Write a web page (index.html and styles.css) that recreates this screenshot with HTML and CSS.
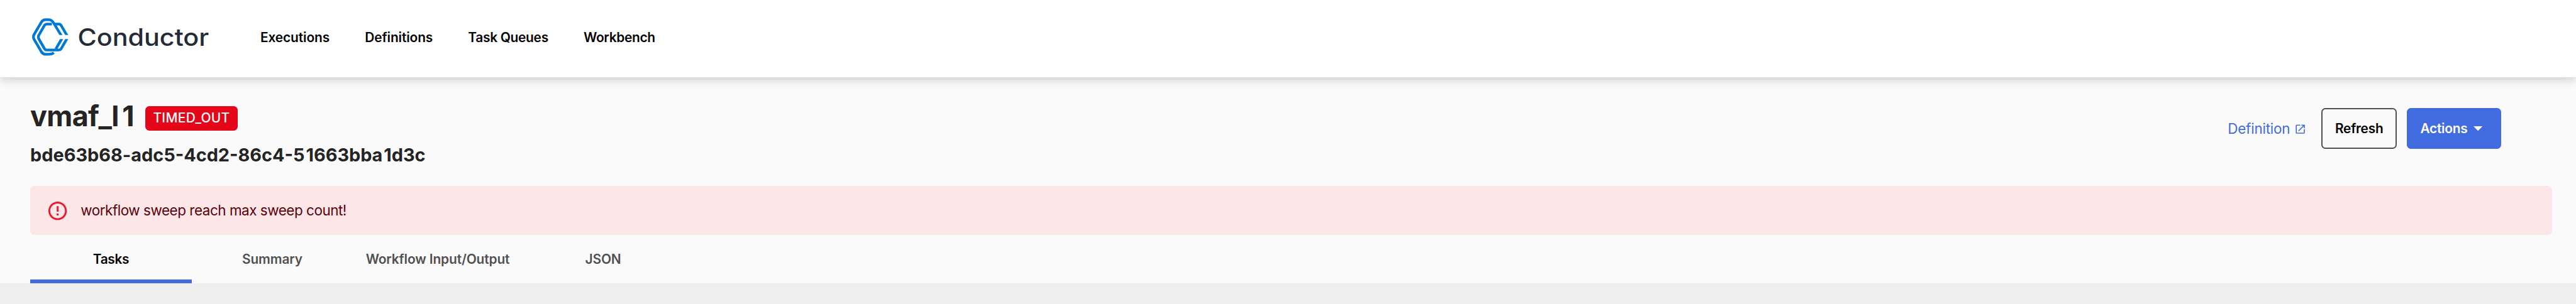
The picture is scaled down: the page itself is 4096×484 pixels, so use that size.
FILE: index.html
```
<!DOCTYPE html>
<html lang="en">
<head>
<meta charset="utf-8">
<title>Conductor</title>
<link rel="stylesheet" href="styles.css">
</head>
<body>
<header class="topbar">
  <a class="brand">
    <svg class="brand-mark" viewBox="72 80 216 224" fill="none" stroke="#0079d3" stroke-width="16">
      <defs>
        <clipPath id="ends"><path d="M60 70H300V180H200V204H300V310H60Z"/></clipPath>
      </defs>
      <g clip-path="url(#ends)">
        <path d="M251 192L200 108Q188 89 172 89H152Q136 89 127 104L84 177Q76 191 84 206L128 281Q137 295 154 295H172Q190 295 202 286"/>
        <path d="M190 115H160Q150 115 145 124L113 179Q106 191 112 203L146 262Q150 269 158 269H230Q240 269 245 262L285 192"/>
        <path d="M213 264L255 192"/>
        <path d="M206 115H232Q240 115 245 123L285 192"/>
      </g>
    </svg>
    <svg class="brand-name" viewBox="0 0 262 50"><text x="-2" y="43" textLength="260.500" lengthAdjust="spacingAndGlyphs">Conductor</text></svg>
  </a>
  <nav class="nav">
    <a>Executions</a><a>Definitions</a><a class="snug">Task Queues</a><a class="snug">Workbench</a>
  </nav>
</header>
<main class="page">
  <section class="heading">
    <div class="titles">
      <h1 class="name"><span>vmaf_<span class="pre-one">l</span>1</span><span class="badge">TIMED_OUT</span></h1>
      <h2 class="id">bde63b68-adc5-4cd2-86c4-<span class="pre-one">5</span>1663bb<span class="pre-one">a</span>1d3c</h2>
    </div>
    <div class="actions">
      <a class="link">Definition
        <svg class="link-icon" viewBox="0 0 24 24" fill="currentColor"><path d="M19 19H5V5h7V3H5a2 2 0 0 0-2 2v14a2 2 0 0 0 2 2h14c1.100 0 2-.9 2-2v-7h-2v7zM14 3v2h3.590l-9.830 9.830 1.410 1.410L19 6.410V10h2V3h-7z"/></svg>
      </a>
      <button class="btn btn-outline">Refresh</button>
      <button class="btn btn-solid">Actions
        <svg class="caret" viewBox="0 0 18 9" fill="currentColor"><path d="M0 0H18L9 9Z"/></svg>
      </button>
    </div>
  </section>
  <div class="alert">
    <svg class="alert-icon" viewBox="0 0 24 24" fill="currentColor"><path d="M11 15h2v2h-2zm0-8h2v6h-2zm.99-5C6.470 2 2 6.480 2 12s4.470 10 9.990 10C17.520 22 22 17.520 22 12S17.520 2 11.990 2zM12 20c-4.420 0-8-3.580-8-8s3.580-8 8-8 8 3.580 8 8-3.580 8-8 8z"/></svg>
    <span>workflow sweep reach max sweep count!</span>
  </div>
  <div class="tabs">
    <a class="tab tab-active">Tasks</a><a class="tab">Summary</a><a class="tab tab-wide">Workflow Input/Output</a><a class="tab">JSON</a>
  </div>
</main>
</body>
</html>
```
FILE: styles.css
```
* { box-sizing: border-box; }
html { font-size: 8.0188px; }
body {
  margin: 0;
  height: 100vh;
  overflow: hidden;
  background: #eee;
  font: 400 2.6rem/1.5 Inter, "Liberation Sans", sans-serif;
  color: #000;
}
.topbar {
  position: relative;
  display: flex;
  align-items: center;
  height: 15.4rem;
  padding: 0 6.4rem;
  background: #fff;
  box-shadow: 0 0.8rem 1.6rem rgba(0, 0, 0, 0.1), 0 0.2rem 2rem rgba(0, 0, 0, 0.1);
}
.brand { display: flex; align-items: center; height: 100%; margin-top: -0.6rem; }
.brand-mark { width: 7.2rem; height: 7.47rem; }
.brand-name { width: 26.2rem; height: 5rem; margin-left: 2rem; overflow: visible; fill: #242a36; }
.brand-name text { font: 500 48px Inter, sans-serif; }
.nav { display: flex; gap: 7rem; margin: -0.55rem 0 0 9.83rem; font-weight: 600; letter-spacing: -0.01rem; }
.snug { letter-spacing: -0.033rem; }
.page { height: 40.9rem; padding-top: 4.2rem; background: #fafafa; }
.heading {
  display: flex;
  justify-content: space-between;
  height: 17.3rem;
  padding: 0 14.8rem 0 6rem;
}
.name {
  display: flex;
  align-items: center;
  height: 7rem;
  margin: 0;
  font-size: 5.6rem;
  font-weight: 700;
  line-height: 1;
  letter-spacing: -0.085rem;
  color: #242424;
}
.pre-one { letter-spacing: 0.11em; }
.badge {
  display: flex;
  align-items: center;
  justify-content: center;
  width: 18.4rem;
  height: 4.8rem;
  margin: 0.8rem 0 0 2.2rem;
  padding-top: 0.1rem;
  border-radius: 0.8rem;
  background: #e50619;
  color: #fff;
  font-size: 2.6rem;
  font-weight: 500;
  letter-spacing: 0.045rem;
}
.id { margin: 1.95rem 0 0; font-size: 3.6rem; font-weight: 700; line-height: 4.4rem; color: #242424; }
.id .pre-one { letter-spacing: 0.07em; }
.actions { display: flex; align-items: center; gap: 2rem; height: 8.2rem; margin-top: 1.8rem; }
.link { display: flex; align-items: center; gap: 0.8rem; margin-right: 1rem; color: #416cdf; font-size: 2.8rem; letter-spacing: -0.025rem; }
.link-icon { width: 2.4rem; height: 2.4rem; margin-top: 0.4rem; }
.btn {
  display: flex;
  align-items: center;
  justify-content: center;
  height: 8.2rem;
  padding: 0;
  border: 0;
  border-radius: 0.8rem;
  font: 600 2.6rem Inter, sans-serif;
  letter-spacing: -0.03rem;
}
.btn-outline { width: 15rem; border: 0.25rem solid #505050; background: #fafafa; color: #000; }
.btn-solid { width: 18.7rem; padding-right: 1.1rem; gap: 1.2rem; background: #416cdf; color: #fff; }
.caret { width: 1.8rem; height: 0.9rem; }
.alert {
  display: flex;
  align-items: center;
  gap: 2.4rem;
  height: 9.8rem;
  margin: 0 4.8rem 0 6rem;
  padding-left: 3.2rem;
  border-radius: 0.8rem;
  background: #fce6e8;
  color: #5c020a;
  font-size: 2.8rem;
  letter-spacing: -0.058rem;
}
.alert-icon { width: 4.4rem; height: 4.4rem; color: #ea1a2f; }
.tabs { display: flex; height: 9.6rem; padding-left: 6rem; font-weight: 600; letter-spacing: -0.012rem; }
.tab {
  display: flex;
  align-items: center;
  justify-content: center;
  width: 32rem;
  padding-top: 0.75rem;
  border-bottom: 0.8rem solid transparent;
  color: #505050;
}
.tab-wide { width: 33.6rem; }
.tab-active { border-color: #416cdf; color: #000; letter-spacing: -0.04rem; }
```
